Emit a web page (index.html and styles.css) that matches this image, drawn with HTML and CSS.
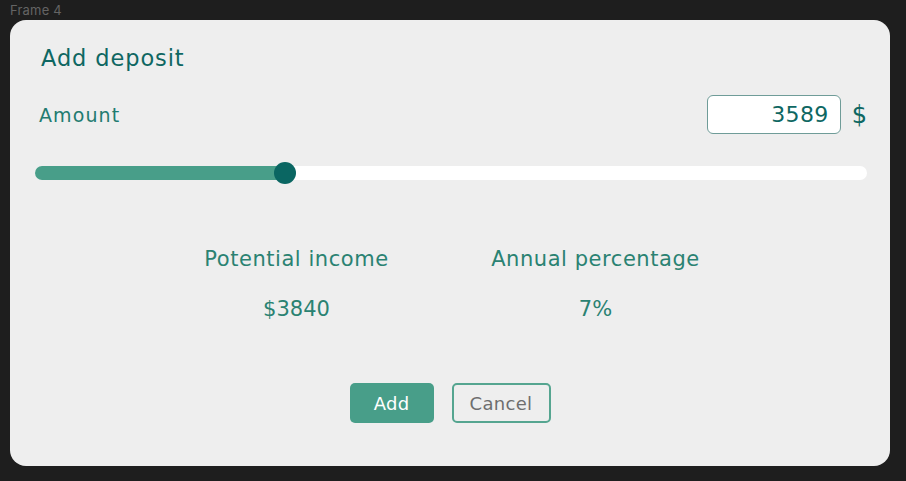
FILE: index.html
```html
<!DOCTYPE html>
<html lang="en">
<head>
<meta charset="utf-8">
<title>Add deposit</title>
<link rel="stylesheet" href="styles.css">
</head>
<body>
  <div class="frame-label">Frame 4</div>
  <div class="card">
    <h1 class="title">Add deposit</h1>
    <div class="amount-row">
      <span class="amount-label">Amount</span>
      <div class="amount-input-wrap">
        <div class="amount-input">3589</div>
        <span class="currency">$</span>
      </div>
    </div>
    <div class="slider">
      <div class="slider-fill" style="width: 250px"></div>
      <div class="slider-thumb"></div>
    </div>
    <div class="stats">
      <div class="stat">
        <div class="stat-label">Potential income</div>
        <div class="stat-value">$3840</div>
      </div>
      <div class="stat">
        <div class="stat-label">Annual percentage</div>
        <div class="stat-value">7%</div>
      </div>
    </div>
    <div class="actions">
      <button class="btn btn-primary">Add</button>
      <button class="btn btn-secondary">Cancel</button>
    </div>
  </div>
</body>
</html>
```

FILE: styles.css
```css
html, body {
  margin: 0;
  padding: 0;
}
body {
  background: #1e1e1e;
  width: 906px;
  height: 481px;
  overflow: hidden;
  font-family: "DejaVu Sans", "Open Sans", sans-serif;
}
.frame-label {
  color: #646464;
  font-family: "Inter", "Noto Sans", sans-serif;
  font-size: 13px;
  letter-spacing: 0.2px;
  line-height: 16px;
  padding: 2px 0 0 10px;
  height: 18px;
}
.card {
  margin: 0 16px 0 10px;
  height: 446px;
  box-sizing: border-box;
  background: #eeeeee;
  border-radius: 16px;
  padding: 25px 23px 0 25px;
  display: flex;
  flex-direction: column;
}
.title {
  margin: 0 0 0 6px;
  font-weight: 400;
  font-size: 22.5px;
  letter-spacing: 0.9px;
  line-height: 27px;
  color: #0e6762;
}
.amount-row {
  margin-top: 23px;
  display: flex;
  align-items: center;
  justify-content: space-between;
  height: 39px;
}
.amount-label {
  margin-left: 4px;
  font-size: 19px;
  letter-spacing: 1.1px;
  color: #227b70;
}
.amount-input-wrap {
  display: flex;
  align-items: center;
  gap: 11px;
}
.amount-input {
  width: 134px;
  height: 39px;
  box-sizing: border-box;
  border: 1px solid #6f9c98;
  border-radius: 6px;
  background: #ffffff;
  text-align: right;
  padding-right: 11px;
  font-size: 22px;
  letter-spacing: 0.4px;
  line-height: 37px;
  color: #0e6762;
}
.currency {
  font-size: 24px;
  line-height: 28px;
  color: #0e6762;
}
.slider {
  position: relative;
  margin-top: 32px;
  height: 14px;
  border-radius: 7px;
  background: #ffffff;
}
.slider-fill {
  height: 100%;
  border-radius: 7px;
  background: #489e89;
}
.slider-thumb {
  position: absolute;
  left: 239px;
  top: -4px;
  width: 22px;
  height: 22px;
  border-radius: 50%;
  background: #0a6662;
}
.stats {
  margin-top: 66px;
  display: grid;
  grid-template-columns: 299px 299px;
  justify-content: center;
  padding-right: 10px;
}
.stat {
  display: flex;
  flex-direction: column;
  align-items: center;
}
.stat-label {
  font-size: 21px;
  letter-spacing: 0.55px;
  line-height: 26px;
  color: #2a8272;
}
.stat-value {
  margin-top: 24px;
  font-size: 21px;
  line-height: 26px;
  color: #2a8272;
}
.actions {
  margin-top: 61px;
  display: flex;
  justify-content: center;
  gap: 18px;
  padding-right: 2px;
}
.btn {
  height: 40px;
  box-sizing: border-box;
  border-radius: 5px;
  font-family: inherit;
  font-size: 18px;
  letter-spacing: 0.3px;
  cursor: pointer;
}
.btn-primary {
  width: 84px;
  border: none;
  background: #489e89;
  color: #ffffff;
}
.btn-secondary {
  width: 99px;
  border: 2px solid #55a590;
  background: transparent;
  color: #6e6e6e;
}
```
